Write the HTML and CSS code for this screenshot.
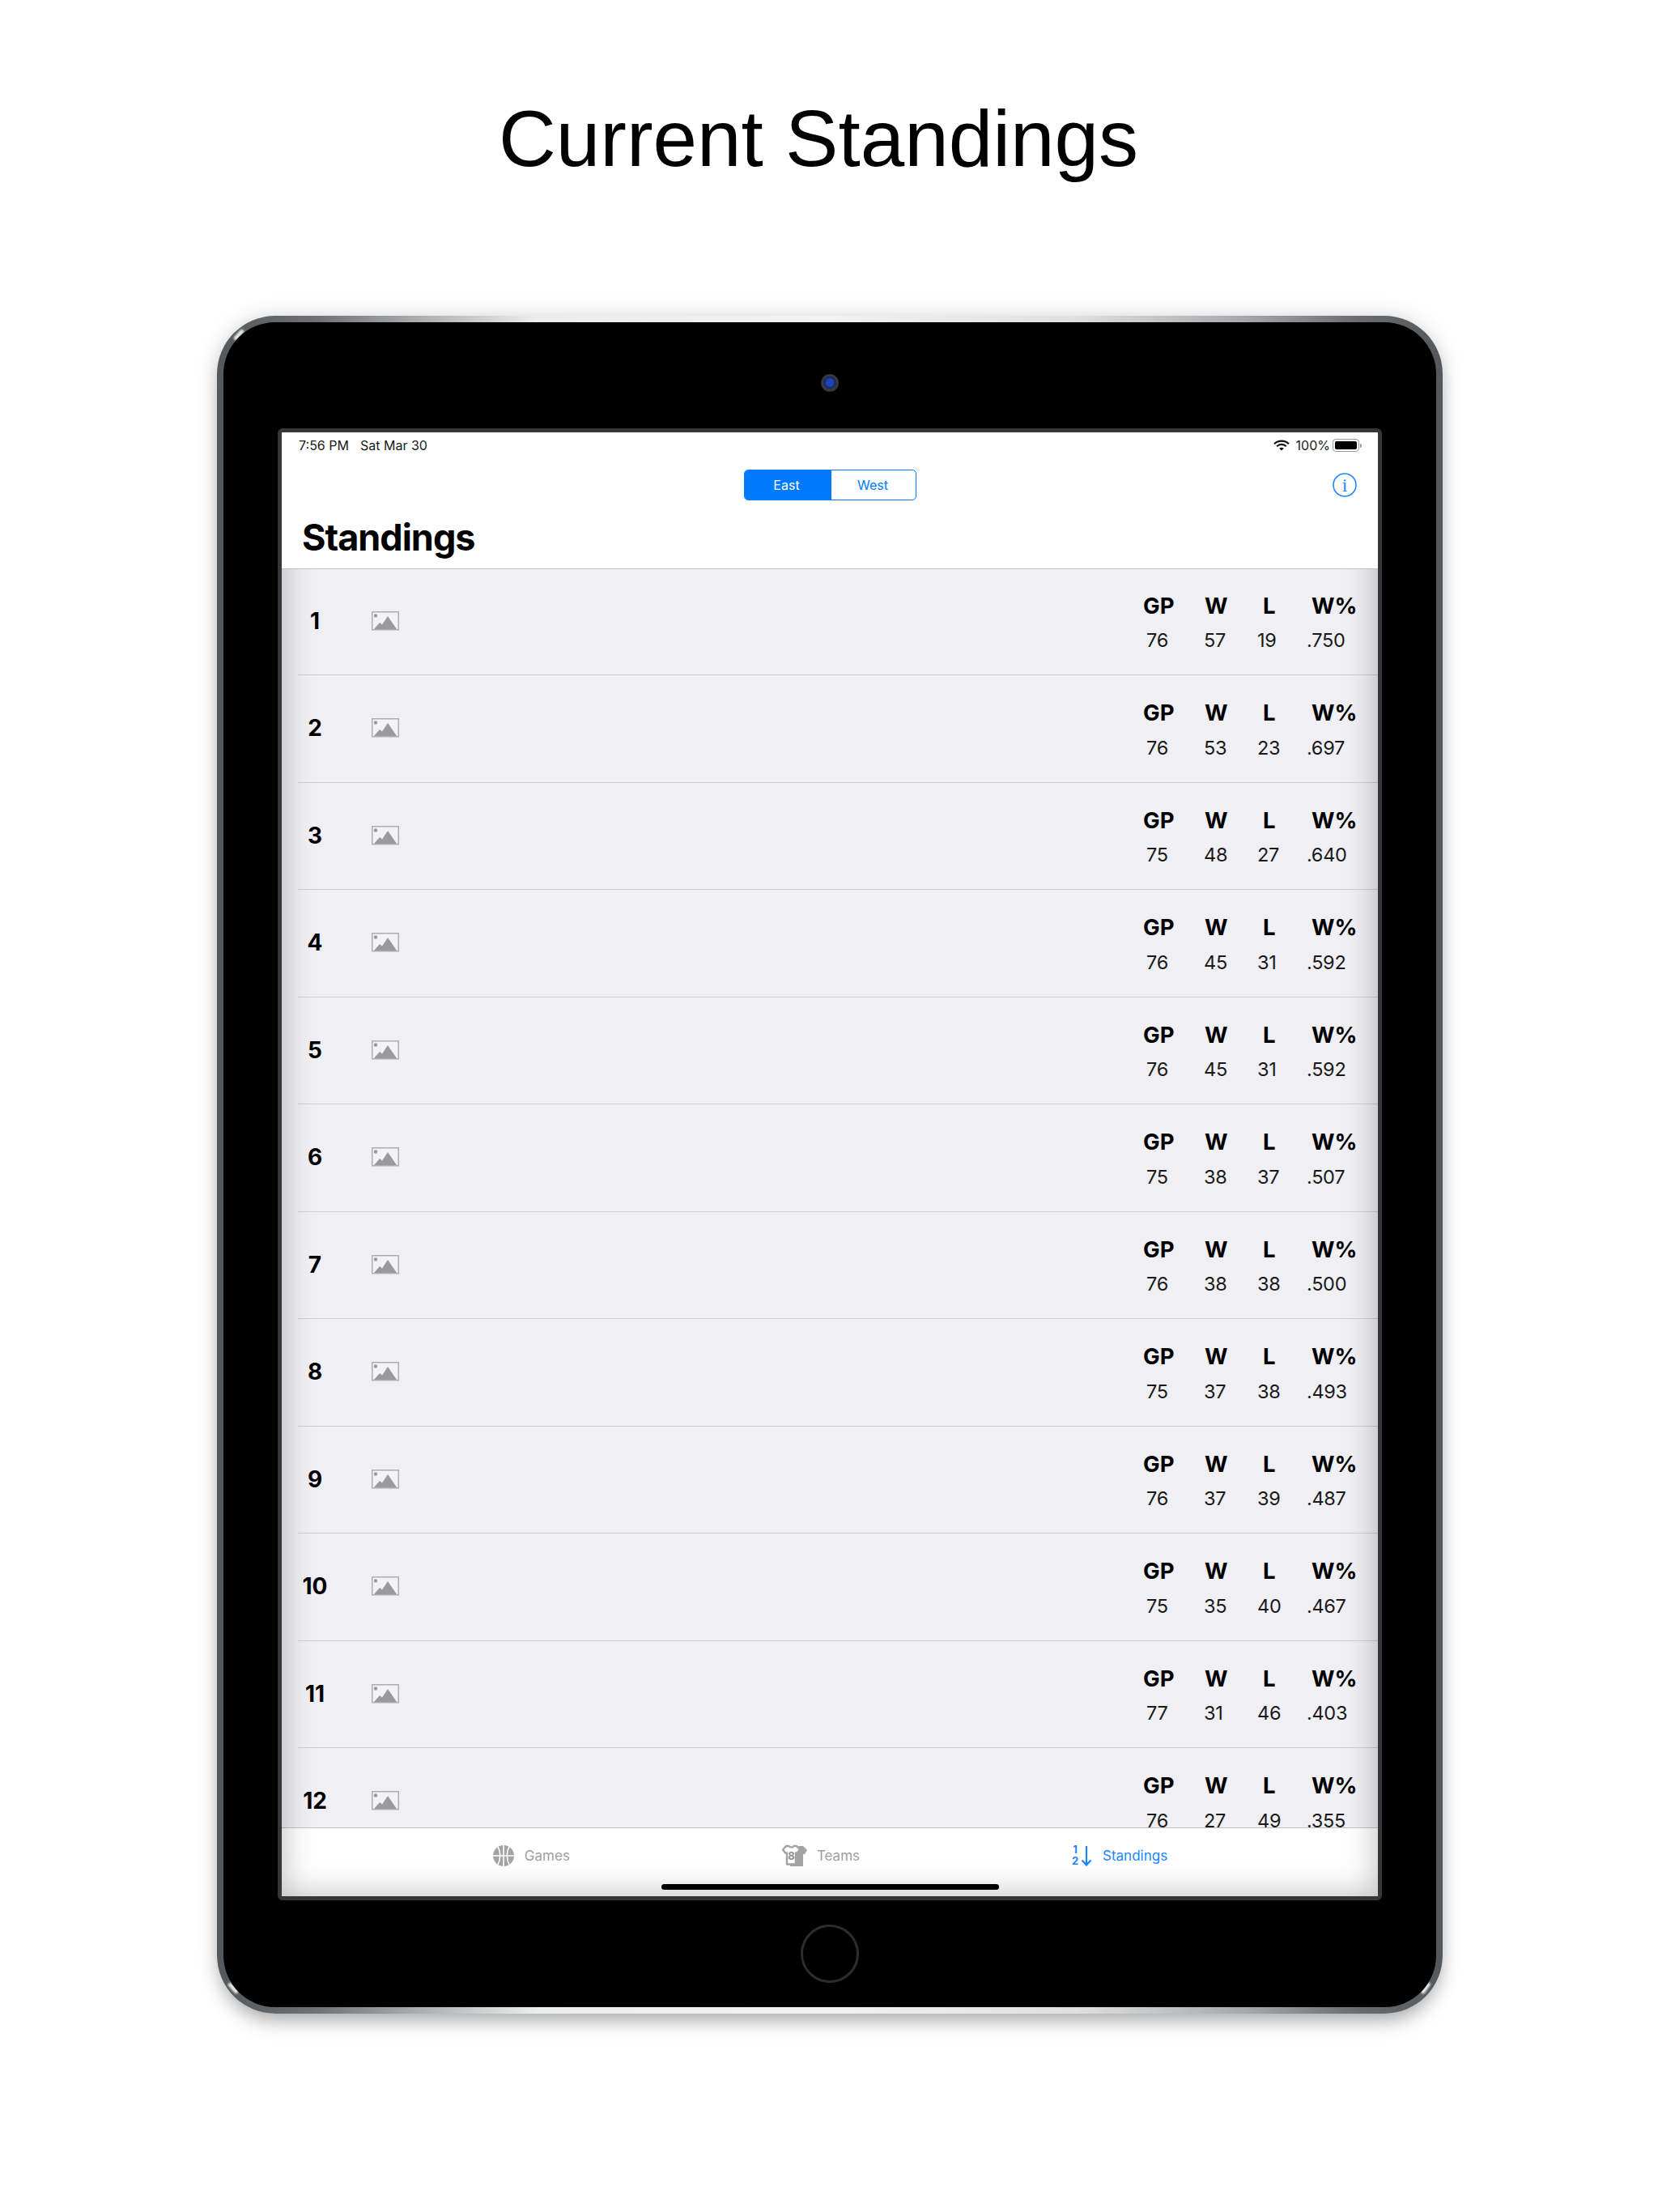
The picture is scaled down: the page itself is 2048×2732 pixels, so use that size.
FILE: index.html
```html
<!DOCTYPE html>
<html lang="en">
<head>
<meta charset="utf-8">
<title>Current Standings</title>
<link rel="stylesheet" href="styles.css">
</head>
<body>
<main class="page">
  <h1 class="headline">Current Standings</h1>
  <div class="device">
    <span class="glint glint-tl"></span><span class="glint glint-tr"></span><span class="glint glint-bl"></span><span class="glint glint-br"></span>
    <div class="face">
      <div class="bezel-top"><span class="camera"></span></div>
      <div class="screen">
        <header class="header">
          <div class="status">
            <div class="status-left"><span>7:56 PM</span><span>Sat Mar 30</span></div>
            <div class="status-right">
              <svg class="wifi" viewBox="0 0 20 14" width="20" height="14"><path d="M1 5.2C6 .4 14 .4 19 5.2" fill="none" stroke="#111" stroke-width="2.2"/><path d="M4.2 8.2c3.3-3 8.3-3 11.6 0" fill="none" stroke="#111" stroke-width="2.2"/><path d="M7.2 10.8c1.7-1.3 3.9-1.3 5.6 0L10 13.6z" fill="#111"/></svg>
              <span>100%</span>
              <span class="battery"><span class="battery-fill"></span></span><span class="battery-nub"></span>
            </div>
          </div>
          <div class="navbar">
            <span></span>
            <div class="segmented"><span class="seg seg-on">East</span><span class="seg">West</span></div>
            <div class="info-wrap"><svg class="info" viewBox="0 0 30 30" width="30" height="30"><circle cx="15" cy="15" r="14" fill="none" stroke="#2288ff" stroke-width="1.6"/><text x="15" y="22.500" text-anchor="middle" class="info-i">i</text></svg></div>
          </div>
          <div class="large-title">Standings</div>
        </header>
        <section class="list">
          <div class="row"><span class="rank">1</span><svg class="ph" viewBox="0 0 34 24" width="34" height="24"><use href="#ph"/></svg><div class="stats"><div class="stat"><b class="h-gp">GP</b><span class="v-gp">76</span></div><div class="stat"><b class="h-w">W</b><span>57</span></div><div class="stat"><b class="h-l">L</b><span>19</span></div><div class="stat"><b class="h-p">W%</b><span>.750</span></div></div></div>
          <div class="row"><span class="rank">2</span><svg class="ph" viewBox="0 0 34 24" width="34" height="24"><use href="#ph"/></svg><div class="stats"><div class="stat"><b class="h-gp">GP</b><span class="v-gp">76</span></div><div class="stat"><b class="h-w">W</b><span>53</span></div><div class="stat"><b class="h-l">L</b><span>23</span></div><div class="stat"><b class="h-p">W%</b><span>.697</span></div></div></div>
          <div class="row"><span class="rank">3</span><svg class="ph" viewBox="0 0 34 24" width="34" height="24"><use href="#ph"/></svg><div class="stats"><div class="stat"><b class="h-gp">GP</b><span class="v-gp">75</span></div><div class="stat"><b class="h-w">W</b><span>48</span></div><div class="stat"><b class="h-l">L</b><span>27</span></div><div class="stat"><b class="h-p">W%</b><span>.640</span></div></div></div>
          <div class="row"><span class="rank">4</span><svg class="ph" viewBox="0 0 34 24" width="34" height="24"><use href="#ph"/></svg><div class="stats"><div class="stat"><b class="h-gp">GP</b><span class="v-gp">76</span></div><div class="stat"><b class="h-w">W</b><span>45</span></div><div class="stat"><b class="h-l">L</b><span>31</span></div><div class="stat"><b class="h-p">W%</b><span>.592</span></div></div></div>
          <div class="row"><span class="rank">5</span><svg class="ph" viewBox="0 0 34 24" width="34" height="24"><use href="#ph"/></svg><div class="stats"><div class="stat"><b class="h-gp">GP</b><span class="v-gp">76</span></div><div class="stat"><b class="h-w">W</b><span>45</span></div><div class="stat"><b class="h-l">L</b><span>31</span></div><div class="stat"><b class="h-p">W%</b><span>.592</span></div></div></div>
          <div class="row"><span class="rank">6</span><svg class="ph" viewBox="0 0 34 24" width="34" height="24"><use href="#ph"/></svg><div class="stats"><div class="stat"><b class="h-gp">GP</b><span class="v-gp">75</span></div><div class="stat"><b class="h-w">W</b><span>38</span></div><div class="stat"><b class="h-l">L</b><span>37</span></div><div class="stat"><b class="h-p">W%</b><span>.507</span></div></div></div>
          <div class="row"><span class="rank">7</span><svg class="ph" viewBox="0 0 34 24" width="34" height="24"><use href="#ph"/></svg><div class="stats"><div class="stat"><b class="h-gp">GP</b><span class="v-gp">76</span></div><div class="stat"><b class="h-w">W</b><span>38</span></div><div class="stat"><b class="h-l">L</b><span>38</span></div><div class="stat"><b class="h-p">W%</b><span>.500</span></div></div></div>
          <div class="row"><span class="rank">8</span><svg class="ph" viewBox="0 0 34 24" width="34" height="24"><use href="#ph"/></svg><div class="stats"><div class="stat"><b class="h-gp">GP</b><span class="v-gp">75</span></div><div class="stat"><b class="h-w">W</b><span>37</span></div><div class="stat"><b class="h-l">L</b><span>38</span></div><div class="stat"><b class="h-p">W%</b><span>.493</span></div></div></div>
          <div class="row"><span class="rank">9</span><svg class="ph" viewBox="0 0 34 24" width="34" height="24"><use href="#ph"/></svg><div class="stats"><div class="stat"><b class="h-gp">GP</b><span class="v-gp">76</span></div><div class="stat"><b class="h-w">W</b><span>37</span></div><div class="stat"><b class="h-l">L</b><span>39</span></div><div class="stat"><b class="h-p">W%</b><span>.487</span></div></div></div>
          <div class="row"><span class="rank">10</span><svg class="ph" viewBox="0 0 34 24" width="34" height="24"><use href="#ph"/></svg><div class="stats"><div class="stat"><b class="h-gp">GP</b><span class="v-gp">75</span></div><div class="stat"><b class="h-w">W</b><span>35</span></div><div class="stat"><b class="h-l">L</b><span>40</span></div><div class="stat"><b class="h-p">W%</b><span>.467</span></div></div></div>
          <div class="row"><span class="rank">11</span><svg class="ph" viewBox="0 0 34 24" width="34" height="24"><use href="#ph"/></svg><div class="stats"><div class="stat"><b class="h-gp">GP</b><span class="v-gp">77</span></div><div class="stat"><b class="h-w">W</b><span>31</span></div><div class="stat"><b class="h-l">L</b><span>46</span></div><div class="stat"><b class="h-p">W%</b><span>.403</span></div></div></div>
          <div class="row"><span class="rank">12</span><svg class="ph" viewBox="0 0 34 24" width="34" height="24"><use href="#ph"/></svg><div class="stats"><div class="stat"><b class="h-gp">GP</b><span class="v-gp">76</span></div><div class="stat"><b class="h-w">W</b><span>27</span></div><div class="stat"><b class="h-l">L</b><span>49</span></div><div class="stat"><b class="h-p">W%</b><span>.355</span></div></div></div>
        </section>
        <nav class="tabbar">
          <div class="tab">
            <svg viewBox="0 0 28 28" width="28" height="28"><circle cx="14" cy="14" r="13" fill="#a3a3a3"/><path d="M14 1v26M1 14h26M7 3c3.500 6 3.500 16 0 22M21 3c-3.500 6-3.500 16 0 22" fill="none" stroke="#fff" stroke-width="1.600"/></svg>
            <span>Games</span>
          </div>
          <div class="tab">
            <svg viewBox="0 0 32 28" width="32" height="28"><path d="M12 4h7l3-2h5l5 5-3 5h-2v15H11z" fill="#a3a3a3"/><path d="M6 2h3.500c1 2 5 2 6 0H19l4 4.500-3 4h-2v14H7v-14H5l-3-4z" fill="#fff" stroke="#a3a3a3" stroke-width="2.400" stroke-linejoin="round"/><text x="12.500" y="19" text-anchor="middle" class="jersey">8</text></svg>
            <span>Teams</span>
          </div>
          <div class="tab tab-on">
            <svg viewBox="0 0 27 26" width="27" height="26"><text x="5" y="10" text-anchor="middle" class="sort">1</text><text x="5" y="24" text-anchor="middle" class="sort">2</text><path d="M19 1v23M13.500 18.500l5.500 6 5.500-6" fill="none" stroke="#1a86ff" stroke-width="2.200"/></svg>
            <span>Standings</span>
          </div>
          <span class="home-bar"></span>
        </nav>
        <div class="screen-shade"></div>
      </div>
      <div class="bezel-bottom"><span class="home"></span></div>
    </div>
  </div>
</main>
<svg class="defs" width="0" height="0"><defs><g id="ph"><rect x=".75" y=".75" width="32.500" height="22" fill="#f3f3f6" stroke="#aeaeb2" stroke-width="1.500"/><circle cx="5" cy="5.500" r="2.200" fill="#9a9a9e"/><path d="M3 22l7-8 3 2.500L20 6l11 16z" fill="#9a9a9e"/></g></defs></svg>
</body>
</html>
```
FILE: styles.css
```css
* { box-sizing: border-box; }
html, body { margin: 0; padding: 0; background: #fff; }
body { width: 2048px; height: 2732px; overflow: hidden; font-family: Inter, "Liberation Sans", sans-serif; color: #000; }
.page { display: flex; flex-direction: column; align-items: flex-start; }
.defs { position: absolute; }

.headline {
  width: 2022px; margin: 0; padding-top: 112px; height: 390px;
  text-align: center; font: 400 98px/118px "Liberation Sans", Arial, sans-serif; color: #000;
}

.device {
  position: relative; margin-left: 268px; width: 1514px; height: 2097px; padding: 8px;
  border-radius: 72px;
  background: linear-gradient(90deg, #55585a 0, #6e7173 8%, #a8aaac 16%, #eceded 26%, #f2f2f2 50%, #e0e0e0 70%, #a5a8ab 84%, #6a6c6f 93%, #55585a 100%);
  box-shadow: 0 0 26px rgba(0,0,0,.16), 0 16px 26px -8px rgba(0,0,0,.28);
}
.glint { position: absolute; width: 16px; height: 5px; border-radius: 3px; background: #e8e8e8; filter: blur(1.2px); }
.glint-tl { left: 19px; top: 21px; transform: rotate(-48deg); }
.glint-tr { right: 13px; top: 39px; transform: rotate(55deg); }
.glint-bl { left: 12px; bottom: 29px; transform: rotate(48deg); }
.glint-br { right: 13px; bottom: 29px; transform: rotate(-55deg); }

.face { position: relative; display: flex; flex-direction: column; align-items: center; height: 100%; border-radius: 64px; background: #000; }
.bezel-top { height: 131px; width: 100%; flex: none; display: flex; align-items: center; justify-content: center; }
.camera { width: 22px; height: 22px; border-radius: 50%; margin-top: 18px; background: radial-gradient(circle at 50% 48%, #1a46b4 0 28%, #16285c 40%, #3c3c40 58%, #2a2a2c 78%, #0a0a0a 100%); }
.bezel-bottom { flex: 1; width: 100%; display: flex; align-items: flex-start; justify-content: center; padding-top: 30px; }
.home { width: 72px; height: 72px; border-radius: 50%; border: 3px solid #2c2c2c; }

.screen {
  position: relative; width: 1364px; height: 1818px; flex: none; border: 5px solid #363636; border-radius: 6px;
  display: flex; flex-direction: column; background: #fff; overflow: hidden;
}
.screen-shade { position: absolute; inset: 0; pointer-events: none; box-shadow: inset 0 0 40px rgba(0,0,0,.28); }

.header { position: relative; z-index: 1; height: 169px; flex: none; background: #fff; border-bottom: 1px solid #c2c2c4; }
.status { height: 32px; display: flex; justify-content: space-between; align-items: center; padding: 0 20px 0 21px; font-size: 16px; color: #1a1a1a; }
.status-left { display: flex; gap: 14px; }
.status-right { display: flex; align-items: center; gap: 6px; }
.wifi { margin-right: 2px; }
.battery { width: 33px; height: 16px; margin-left: -3px; padding: 2px; border: 1.5px solid #9a9a9a; border-radius: 4px; display: flex; }
.battery-fill { flex: 1; background: #000; border-radius: 2px; }
.battery-nub { width: 2px; height: 5px; margin-left: -5px; background: #999; border-radius: 0 2px 2px 0; }

.navbar { margin-top: 14px; display: grid; grid-template-columns: 1fr 213px 1fr; align-items: center; }
.segmented { height: 38px; display: grid; grid-template-columns: 107px 106px; border: 1.5px solid #007aff; border-radius: 5px; overflow: hidden; font-size: 16px; color: #007aff; }
.seg { display: flex; align-items: center; justify-content: center; padding-right: 3px; }
.seg-on { background: #007aff; color: #fff; }
.info-wrap { display: flex; justify-content: flex-end; padding-right: 26px; }
.info-i { font: 400 24px "Liberation Serif", serif; fill: #2288ff; }
.large-title { padding: 18px 0 0 25px; font-size: 45px; line-height: 56px; font-weight: 700; letter-spacing: -1px; }

.list { flex: 1; min-height: 0; margin-top: -1.5px; overflow: hidden; background: #efeff4; }
.row { height: 132.5px; margin-left: 20px; padding-bottom: 1px; border-bottom: 1px solid #cfcfd3; display: flex; align-items: center; }
.rank { width: 42px; text-align: center; font-size: 28px; font-weight: 700; }
.ph { margin-left: 49px; flex: none; }
.stats { margin-left: auto; margin-top: 5px; width: 290px; display: grid; grid-template-columns: 75px 66px 61px 88px; }
.stat { display: flex; flex-direction: column; gap: 11.5px; }
.stat b { font-size: 27.5px; line-height: 31px; font-weight: 700; }
.stat span { font-size: 23.5px; line-height: 31px; letter-spacing: -.3px; color: #1a1a1a; }
.h-gp { margin-left: 0; }
.v-gp { margin-left: 4px; }
.h-w { margin-left: 1px; }
.h-l { margin-left: 7px; }
.h-p { margin-left: 6px; }

.tabbar {
  position: relative; height: 85px; flex: none; background: #fff; border-top: 1px solid #c2c2c4;
  display: flex; justify-content: center; align-items: flex-start; gap: 261px; padding-top: 20px;
  font-size: 17px; color: #a0a0a0;
}
.tab { display: flex; align-items: center; gap: 12px; height: 28px; }
.tab-on { color: #1a86ff; }
.jersey { font: 700 13px Inter, sans-serif; fill: #8f8f8f; }
.sort { font: 700 13px Inter, sans-serif; fill: #1a86ff; }
.home-bar { position: absolute; left: 469px; bottom: 8px; width: 417px; height: 7px; border-radius: 4px; background: #000; }
```
